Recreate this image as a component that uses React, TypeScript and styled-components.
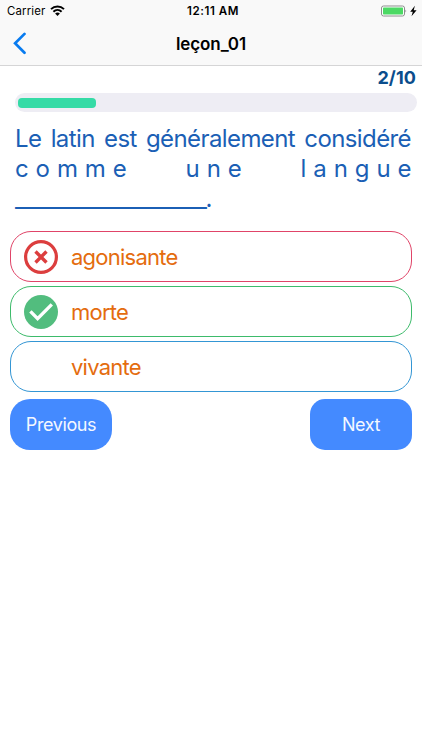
import React from "react";
import styled, { createGlobalStyle } from "styled-components";

const GlobalStyle = createGlobalStyle`
  * { box-sizing: border-box; }
  body { margin: 0; background: #fff; font-family: Inter, "Liberation Sans", sans-serif; }
`;

const Screen = styled.main`
  display: flex;
  flex-direction: column;
  width: 422px;
  height: 750px;
  overflow: hidden;
  background: #fff;
`;

const Header = styled.header`
  height: 66px;
  background: #f9f9f9;
  border-bottom: 1px solid #d5d5d6;
`;

const StatusBar = styled.div`
  display: grid;
  grid-template-columns: 1fr auto 1fr;
  align-items: center;
  height: 22px;
  padding: 0 5px 0 7px;
  color: #000;
`;

const Carrier = styled.div`
  display: flex;
  align-items: center;
  gap: 5px;
  font-size: 11.4px;
  line-height: 22px;
  letter-spacing: 0.15px;
`;

const Clock = styled.div`
  padding-left: 2px;
  font-size: 11.6px;
  font-weight: 600;
  line-height: 22px;
  letter-spacing: 0.55px;
`;

const Power = styled.div`
  display: flex;
  justify-content: flex-end;
  align-items: center;
  height: 21px;
`;

const NavBar = styled.nav`
  display: grid;
  grid-template-columns: 40px 1fr 40px;
  align-items: center;
  height: 43px;
`;

const BackButton = styled.button`
  display: flex;
  padding: 0 0 0 11px;
  border: 0;
  background: none;
`;

const Title = styled.h1`
  margin: 0;
  text-align: center;
  font-size: 17px;
  font-weight: 600;
  line-height: 42px;
  letter-spacing: -0.1px;
`;

const Counter = styled.div`
  height: 27px;
  padding: 0 6px 0 0;
  text-align: right;
  color: #0b4d8c;
  font-size: 18px;
  font-weight: 700;
  line-height: 24px;
  letter-spacing: 0.1px;
`;

const Track = styled.div`
  height: 19px;
  margin: 0 5px 0 15px;
  padding: 5px 3px 4px;
  border-radius: 10px;
  background: #eeedf4;
`;

const Fill = styled.div`
  width: 78px;
  height: 10px;
  border-radius: 4px;
  background: #35dba6;
`;

const Question = styled.section`
  height: 119px;
  padding: 10px 11px 0 15px;
  color: #1b5fb5;
`;

const Line = styled.div<{ $spacing: number; $trim?: number }>`
  display: flex;
  justify-content: space-between;
  height: 30px;
  margin-right: ${(p) => p.$trim ?? 0}px;
  font-size: 24px;
  line-height: 33px;
  letter-spacing: ${(p) => p.$spacing}px;
  white-space: nowrap;
`;

const Blank = styled.div`
  height: 31px;
  font-size: 24px;
  line-height: 34px;
  letter-spacing: -1.42px;
  white-space: nowrap;
`;

const Answers = styled.div`
  display: flex;
  flex-direction: column;
  gap: 4px;
  padding: 0 10px;
`;

const Answer = styled.button<{ $color: string }>`
  display: grid;
  grid-template-columns: 48px 1fr;
  align-items: center;
  height: 51px;
  padding: 0 0 0 12px;
  border: 1px solid ${(p) => p.$color};
  border-radius: 21px;
  background: #fff;
  color: #e46c0e;
  font: 400 22px/48px Inter, "Liberation Sans", sans-serif;
  letter-spacing: -0.75px;
  text-align: left;
`;

const Actions = styled.div`
  display: flex;
  justify-content: space-between;
  padding: 7px 10px 0;
`;

const ActionButton = styled.button<{ $radius: number }>`
  width: 102px;
  height: 51px;
  padding: 0;
  border: 0;
  border-radius: ${(p) => p.$radius}px;
  background: #448aff;
  color: #f4f8ff;
  font: 400 18px/50px Inter, "Liberation Sans", sans-serif;
  letter-spacing: -0.4px;
`;

const WifiIcon = () => (
  <svg width="15" height="12" viewBox="0 0 15 12" fill="none" stroke="#000" strokeWidth="2">
    <path d="M1 4.1a9.4 9.4 0 0 1 13 0M3.4 6.7a6 6 0 0 1 8.2 0" />
    <path d="M7.5 11 5.1 8.6a3.5 3.5 0 0 1 4.8 0z" fill="#000" stroke="none" />
  </svg>
);

const BatteryIcon = () => (
  <svg width="37" height="13" viewBox="0 0 37 13">
    <rect x="1.5" y="1" width="23" height="10" rx="2" fill="#fff" stroke="#8d8d8d" />
    <rect x="3" y="2.5" width="20" height="7" rx="0.7" fill="#4cd964" />
    <path d="M25.5 4.5q1.5 1.5 0 3z" fill="#777" />
    <path d="M34.9 0.7 30.2 6.8h2.6l-1.3 4.5 5.1-6.1h-2.9z" fill="#000" />
  </svg>
);

const BackIcon = () => (
  <svg width="15" height="23" viewBox="0 0 15 23" fill="none">
    <path d="M13.5 1.9 4.1 11.3l9.4 9.4" stroke="#087bf0" strokeWidth="2.7" strokeLinecap="round" />
  </svg>
);

const WrongIcon = () => (
  <svg width="36" height="36" viewBox="0 0 36 36" fill="none" stroke="#dc3e3e">
    <circle cx="18" cy="18" r="15.4" strokeWidth="3.2" />
    <path d="m12.5 12.5 11 11M23.5 12.5l-11 11" strokeWidth="3.4" />
  </svg>
);

const RightIcon = () => (
  <svg width="36" height="36" viewBox="0 0 36 36" fill="none">
    <circle cx="18" cy="18" r="17" fill="#52bd7e" />
    <path d="m7.4 17.4 7.2 7.2L28.8 10.4" stroke="#fff" strokeWidth="3.4" />
  </svg>
);

export default function App() {
  return (
    <>
      <GlobalStyle />
      <Screen>
        <Header>
          <StatusBar>
            <Carrier>Carrier <WifiIcon /></Carrier>
            <Clock>12:11 AM</Clock>
            <Power><BatteryIcon /></Power>
          </StatusBar>
          <NavBar>
            <BackButton aria-label="Back"><BackIcon /></BackButton>
            <Title>leçon_01</Title>
          </NavBar>
        </Header>
        <Counter>2/10</Counter>
        <Track><Fill /></Track>
        <Question>
          <Line $spacing={-0.6}>
            <span>Le</span><span>latin</span><span>est</span><span>généralement</span><span>considéré</span>
          </Line>
          <Line $spacing={6.9} $trim={-7.4}>
            <span>comme</span><span>une</span><span>langue</span>
          </Line>
          <Blank>____________________.</Blank>
        </Question>
        <Answers>
          <Answer $color="#e04468"><WrongIcon /><span>agonisante</span></Answer>
          <Answer $color="#3dbb6b"><RightIcon /><span>morte</span></Answer>
          <Answer $color="#3496d4"><span /><span>vivante</span></Answer>
        </Answers>
        <Actions>
          <ActionButton $radius={20}>Previous</ActionButton>
          <ActionButton $radius={15}>Next</ActionButton>
        </Actions>
      </Screen>
    </>
  );
}
